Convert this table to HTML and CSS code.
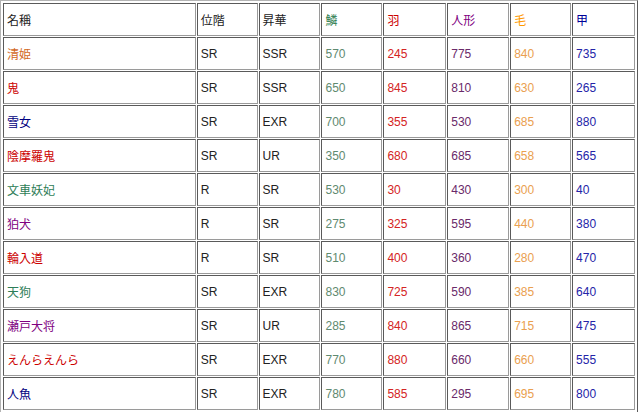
FILE: index.html
```html
<!DOCTYPE html>
<html>
<head>
<meta charset="utf-8">
<link rel="stylesheet" href="styles.css">
</head>
<body>
<table class="grid">
<colgroup>
<col class="c-name"><col class="c-rank"><col class="c-up"><col class="c-s1"><col class="c-s2"><col class="c-s3"><col class="c-s4"><col class="c-s5">
</colgroup>
<tr><td>名稱</td><td>位階</td><td>昇華</td><td class="h-green">鱗</td><td class="h-red">羽</td><td class="h-purple">人形</td><td class="h-orange">毛</td><td class="h-navy">甲</td></tr>
<tr><td class="n-brown">清姫</td><td>SR</td><td>SSR</td><td class="v1">570</td><td class="v2">245</td><td class="v3">775</td><td class="v4">840</td><td class="v5">735</td></tr>
<tr><td class="n-red">鬼</td><td>SR</td><td>SSR</td><td class="v1">650</td><td class="v2">845</td><td class="v3">810</td><td class="v4">630</td><td class="v5">265</td></tr>
<tr><td class="n-navy">雪女</td><td>SR</td><td>EXR</td><td class="v1">700</td><td class="v2">355</td><td class="v3">530</td><td class="v4">685</td><td class="v5">880</td></tr>
<tr><td class="n-red">陰摩羅鬼</td><td>SR</td><td>UR</td><td class="v1">350</td><td class="v2">680</td><td class="v3">685</td><td class="v4">658</td><td class="v5">565</td></tr>
<tr><td class="n-green">文車妖妃</td><td>R</td><td>SR</td><td class="v1">530</td><td class="v2">30</td><td class="v3">430</td><td class="v4">300</td><td class="v5">40</td></tr>
<tr><td class="n-purple">狛犬</td><td>R</td><td>SR</td><td class="v1">275</td><td class="v2">325</td><td class="v3">595</td><td class="v4">440</td><td class="v5">380</td></tr>
<tr><td class="n-red">輪入道</td><td>R</td><td>SR</td><td class="v1">510</td><td class="v2">400</td><td class="v3">360</td><td class="v4">280</td><td class="v5">470</td></tr>
<tr><td class="n-green">天狗</td><td>SR</td><td>EXR</td><td class="v1">830</td><td class="v2">725</td><td class="v3">590</td><td class="v4">385</td><td class="v5">640</td></tr>
<tr><td class="n-purple">瀬戸大将</td><td>SR</td><td>UR</td><td class="v1">285</td><td class="v2">840</td><td class="v3">865</td><td class="v4">715</td><td class="v5">475</td></tr>
<tr><td class="n-red">えんらえんら</td><td>SR</td><td>EXR</td><td class="v1">770</td><td class="v2">880</td><td class="v3">660</td><td class="v4">660</td><td class="v5">555</td></tr>
<tr><td class="n-navy">人魚</td><td>SR</td><td>EXR</td><td class="v1">780</td><td class="v2">585</td><td class="v3">295</td><td class="v4">695</td><td class="v5">800</td></tr>
</table>
</body>
</html>
```
FILE: styles.css
```css
html, body {
  margin: 0;
  padding: 0;
  background: #ffffff;
}
.grid {
  table-layout: fixed;
  border-collapse: separate;
  border-spacing: 1px;
  padding: 1px;
  border: 1px solid;
  border-color: #b4b4b4 #5a5a5a #5a5a5a #b4b4b4;
  font-family: "Liberation Sans", "Noto Sans CJK JP", sans-serif;
  font-size: 12px;
  color: #222;
}
.grid td {
  height: 33px;
  box-sizing: border-box;
  border: 1px solid;
  border-color: #5a5a5a #9a9a9a #9a9a9a #5a5a5a;
  padding: 0 0 0 3px;
  vertical-align: middle;
  white-space: nowrap;
}
.c-name { width: 193px; }
.c-rank { width: 61px; }
.c-up { width: 62px; }
.c-s1 { width: 61px; }
.c-s2 { width: 63px; }
.c-s3 { width: 62px; }
.c-s4 { width: 61px; }
.c-s5 { width: 63px; }

.h-green { color: #2e7d4f; }
.h-red { color: #cc0000; }
.h-purple { color: #800080; }
.h-orange { color: #ff9900; }
.h-navy { color: #000099; }

.n-brown { color: #d2691e; }
.n-red { color: #cc0000; }
.n-navy { color: #000080; }
.n-green { color: #2e7d57; }
.n-purple { color: #800080; }

.v1 { color: #5f8a70; }
.v2 { color: #d42424; }
.v3 { color: #6a2a6a; }
.v4 { color: #eaa050; }
.v5 { color: #2424a8; }
```
